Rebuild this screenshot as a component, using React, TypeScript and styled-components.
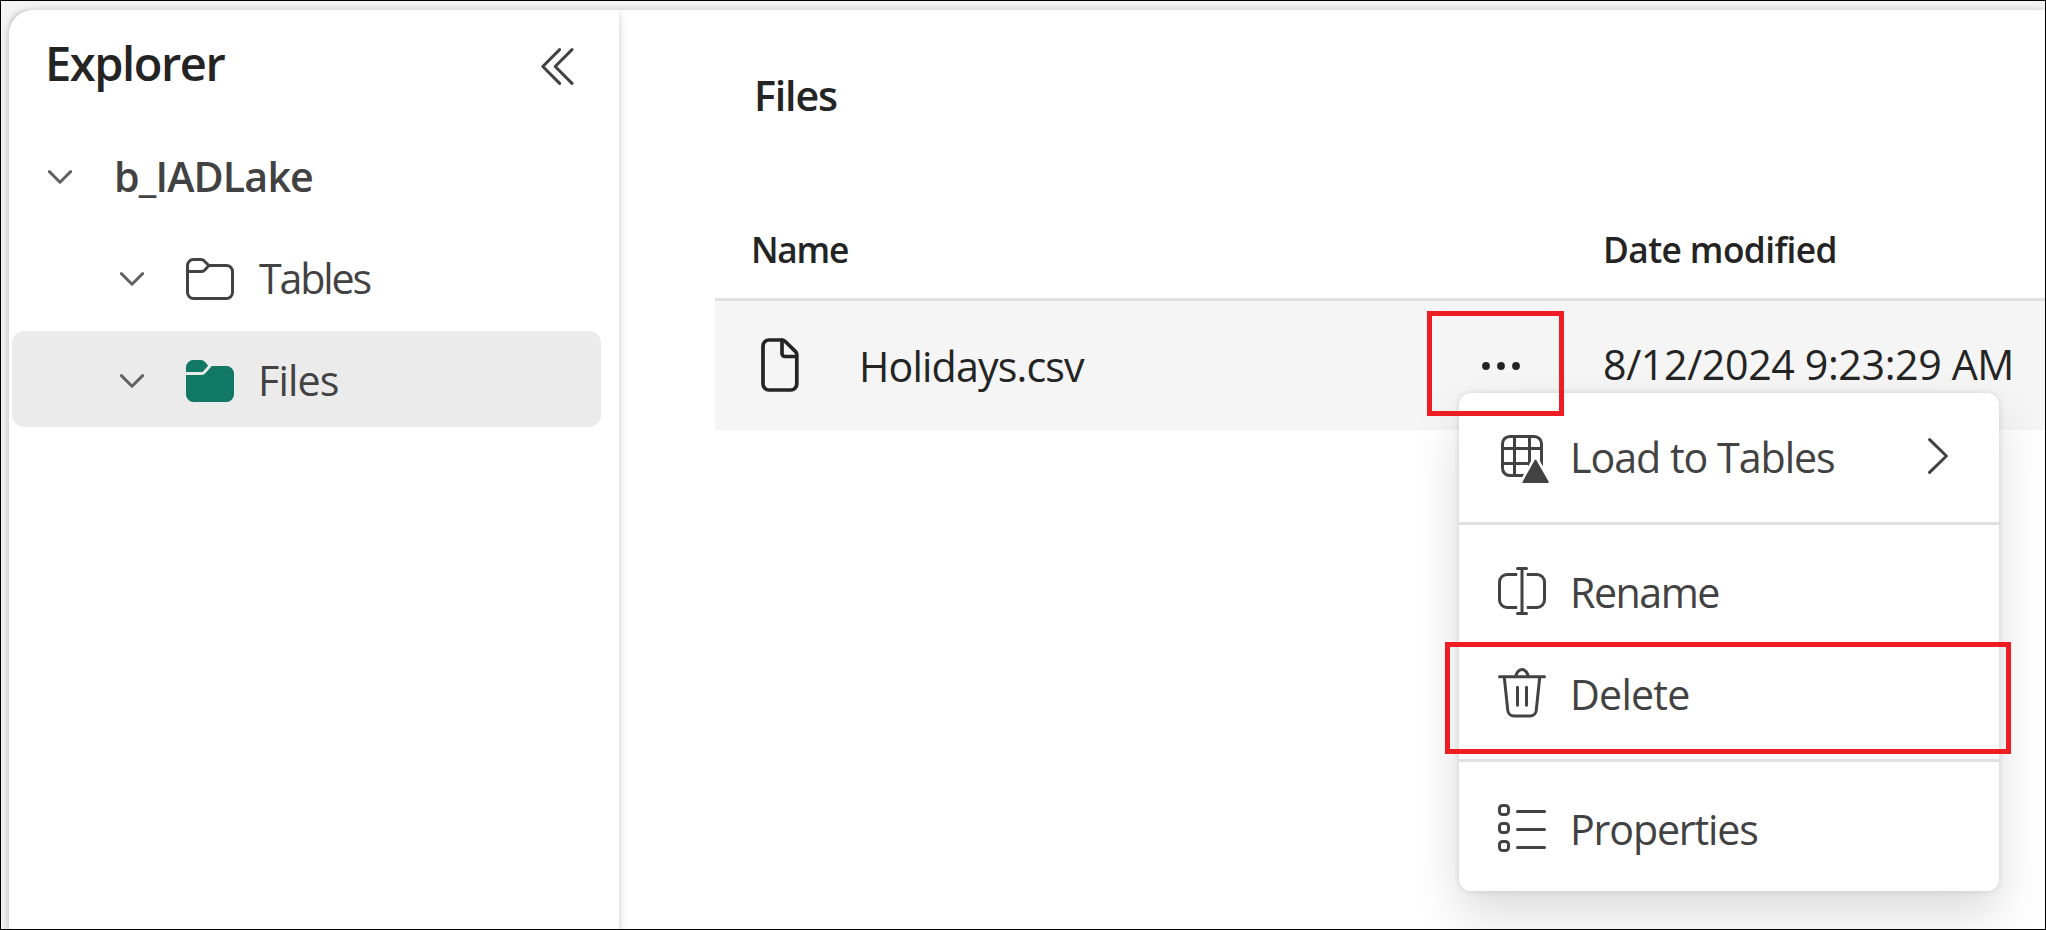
import React from "react";
import styled, { createGlobalStyle } from "styled-components";

const GlobalStyle = createGlobalStyle`
  *, *::before, *::after { box-sizing: border-box; }
  body { margin: 0; font-family: "Open Sans", "Noto Sans", sans-serif; overflow: hidden; }
`;

const Frame = styled.div`
  position: relative;
  width: 2046px;
  height: 930px;
  border: 1px solid #000;
  padding: 9px 0 0 8px;
  background: #f5f4f4;
  overflow: hidden;
`;

const Shell = styled.div`
  display: flex;
  width: 100%;
  height: 920px;
  border-radius: 24px 0 0 0;
  background: #fff;
  box-shadow: 0 0 6px rgba(0, 0, 0, 0.12), 0 3px 12px rgba(0, 0, 0, 0.14);
`;

const Sidebar = styled.aside`
  flex: none;
  width: 610px;
  border-radius: 24px 0 0 0;
  background: #fff;
  box-shadow: 0 0 6px rgba(0, 0, 0, 0.12), 0 6px 12px rgba(0, 0, 0, 0.1);
  clip-path: inset(0 -20px 0 0);
`;

const Label = styled.span<{ $size?: number; $weight?: number; $track?: number; $color?: string; $drop?: number }>`
  display: block;
  font-size: ${(p) => p.$size ?? 41.2}px;
  font-weight: ${(p) => p.$weight ?? 400};
  letter-spacing: ${(p) => p.$track ?? 0}px;
  color: ${(p) => p.$color ?? "#424242"};
  line-height: 60px;
  white-space: nowrap;
  padding-top: ${(p) => Math.max(p.$drop ?? 0, 0)}px;
  padding-bottom: ${(p) => Math.max(-(p.$drop ?? 0), 0)}px;
`;

const SidebarHeader = styled.header`
  display: flex;
  justify-content: space-between;
  align-items: flex-start;
  height: 117px;
  padding: 23px 45px 0 36px;
`;

const CollapseButton = styled.button`
  display: flex;
  margin: 15px 0 0;
  padding: 0;
  border: 0;
  background: none;
`;

const Tree = styled.div`
  display: flex;
  flex-direction: column;
  gap: 6px;
  margin: 0 18px 0 3px;
`;

const TreeRow = styled.div<{ $level: number; $selected?: boolean }>`
  display: flex;
  align-items: center;
  height: 96px;
  padding: 4px 0 0 ${(p) => 36 + p.$level * 72}px;
  border-radius: 12px;
  background: ${(p) => (p.$selected ? "#ebebeb" : "transparent")};
`;

const TreeText = styled.div<{ $gap: number }>`
  margin-left: ${(p) => p.$gap}px;
`;

const FolderSlot = styled.span`
  display: flex;
  margin-left: 36px;
`;

const Main = styled.main`
  flex: 1;
  min-width: 0;
  padding: 55px 0 0 96px;
`;

const Title = styled.h1`
  margin: 0;
  padding-left: 39px;
  height: 135px;
`;

const TableHead = styled.div`
  display: grid;
  grid-template-columns: 852px 1fr;
  align-items: center;
  height: 101px;
  padding: 0 0 1px 36px;
  border-bottom: 3px solid #e0e0e0;
`;

const TableRow = styled.div`
  display: grid;
  grid-template-columns: 99px 622px 122px 1fr;
  align-items: center;
  height: 129px;
  padding-left: 45px;
  background: #f5f5f5;
`;

const DocumentSlot = styled.span`
  display: flex;
  padding-bottom: 2px;
`;

const Menu = styled.div`
  position: absolute;
  left: 1458px;
  top: 392px;
  width: 540px;
  padding: 14px 0 10px;
  border-radius: 12px;
  background: #fff;
  box-shadow: 0 0 6px rgba(0, 0, 0, 0.12), 0 24px 48px rgba(0, 0, 0, 0.14);
`;

const MenuItem = styled.div`
  display: flex;
  align-items: center;
  height: 102px;
  padding: 0 50px 4px 33px;
`;

const MenuText = styled.div`
  flex: 1;
  margin-left: 18px;
`;

const MenuDivider = styled.div`
  height: 3px;
  margin: 13px 0 17px;
  background: #e0e0e0;
`;

const Highlight = styled.div<{ $x: number; $y: number; $w: number; $h: number }>`
  position: absolute;
  left: ${(p) => p.$x}px;
  top: ${(p) => p.$y}px;
  width: ${(p) => p.$w}px;
  height: ${(p) => p.$h}px;
  border: 5px solid #ee1d24;
`;

const Icon = styled.svg<{ $stroke?: string; $fill?: string; $width?: number }>`
  display: block;
  flex: none;
  fill: ${(p) => p.$fill ?? "none"};
  stroke: ${(p) => p.$stroke ?? "#424242"};
  stroke-width: ${(p) => p.$width ?? 1};
  stroke-linecap: round;
  stroke-linejoin: round;
`;

const ChevronDown = () => (
  <Icon width="24" height="14" viewBox="0 0 24 14" $stroke="#616161" $width={2.9}>
    <path d="M1.4 1.6 12 12.2 22.6 1.6" />
  </Icon>
);

const ChevronRight = () => (
  <Icon width="21" height="36" viewBox="0 0 21 36" $width={3}>
    <path d="M1.6 1.6 18.4 18 1.6 34.4" />
  </Icon>
);

const DoubleChevronLeft = () => (
  <Icon width="33" height="37" viewBox="0 0 33 37" $width={3}>
    <path d="M18.6 1.6 1.8 18.5 18.6 35.4M31 1.6 14.2 18.5 31 35.4" />
  </Icon>
);

const FolderOutline = () => (
  <Icon width="60" height="60" viewBox="0 0 20 20">
    <path d="M9.6 5.5h5.9a2 2 0 0 1 2 2v7a2 2 0 0 1-2 2h-11a2 2 0 0 1-2-2v-9a2 2 0 0 1 2-2h2.5c.45 0 .85.2 1.1.5L9.6 5.5 8.2 7.1c-.25.25-.55.4-.9.4H2.6" />
  </Icon>
);

const FolderFilled = () => (
  <Icon width="60" height="60" viewBox="0 0 20 20" $fill="#117865" $stroke="none">
    <path d="M2 7V5.5A2.5 2.5 0 0 1 4.5 3h2.4c.6 0 1.1.25 1.45.65L9.4 4.95 7.7 6.8a.7.7 0 0 1-.5.2Z" />
    <path d="M2 8h5.2c.5 0 .9-.2 1.25-.55L10.6 5h4.9A2.5 2.5 0 0 1 18 7.5v7a2.5 2.5 0 0 1-2.5 2.5h-11A2.5 2.5 0 0 1 2 14.5Z" />
  </Icon>
);

const DocumentIcon = () => (
  <Icon width="40" height="56" viewBox="0 0 40 56" $stroke="#242424" $width={3.7}>
    <path d="M9 3H22c1.2 0 2.2.4 3 1.2l10.6 10.4c.8.8 1.2 1.8 1.2 3V47a6 6 0 0 1-6 6H9a6 6 0 0 1-6-6V9a6 6 0 0 1 6-6Z" />
    <path d="M22 3v13.5a3 3 0 0 0 3 3h11.4" />
  </Icon>
);

const MoreIcon = () => (
  <Icon width="40" height="10" viewBox="0 0 40 10" $fill="#242424" $stroke="none">
    <circle cx="5" cy="5" r="3.9" />
    <circle cx="20" cy="5" r="3.9" />
    <circle cx="35" cy="5" r="3.9" />
  </Icon>
);

const LoadTableIcon = () => (
  <Icon width="60" height="60" viewBox="0 0 20 20">
    <rect x="3.5" y="3.5" width="13" height="13" rx="2.4" />
    <path d="M7.5 3.5v13M12.5 3.5v13M3.5 7.5h13M3.5 12.5h13" />
    <path d="m14.5 11.4-4 7.3h8.1Z" fill="#fff" stroke="#fff" strokeWidth="2.3" />
    <path d="m14.5 11.5-4.05 7.2h8.2Z" fill="#424242" strokeWidth="0.6" />
  </Icon>
);

const RenameIcon = () => (
  <Icon width="60" height="60" viewBox="0 0 20 20">
    <path
      strokeLinecap="butt"
      d="M8.4 4.5H5A2.5 2.5 0 0 0 2.5 7v6A2.5 2.5 0 0 0 5 15.5h3.4M11.6 4.5H15A2.5 2.5 0 0 1 17.5 7v6a2.5 2.5 0 0 1-2.5 2.5h-3.4"
    />
    <path d="M8.5 2.5h3M8.5 17.5h3M10 2.5v15" />
  </Icon>
);

const DeleteIcon = () => (
  <Icon width="60" height="60" viewBox="0 0 20 20">
    <path d="M2.5 4.6h15M8 4.6a2 2.4 0 0 1 4 0M4.1 4.8l1.15 11a2.1 2.1 0 0 0 2.1 1.9h5.3a2.1 2.1 0 0 0 2.1-1.9l1.15-11M8.5 8.1v6M11.5 8.1v6" />
  </Icon>
);

const PropertiesIcon = () => (
  <Icon width="60" height="60" viewBox="0 0 20 20">
    {[2.5, 8.5, 14.5].map((y) => (
      <React.Fragment key={y}>
        <rect x="2.5" y={y} width="3" height="3" rx="1" />
        <path d={`M8.5 ${y + 2}h9`} />
      </React.Fragment>
    ))}
  </Icon>
);

export default function App() {
  return (
    <>
      <GlobalStyle />
      <Frame>
        <Shell>
          <Sidebar>
            <SidebarHeader>
              <Label $size={47} $weight={600} $track={-1.45} $color="#242424">Explorer</Label>
              <CollapseButton aria-label="Collapse explorer"><DoubleChevronLeft /></CollapseButton>
            </SidebarHeader>
            <Tree>
              <TreeRow $level={0}>
                <ChevronDown />
                <TreeText $gap={42}><Label $weight={600} $track={-0.86} $drop={-2}>b_IADLake</Label></TreeText>
              </TreeRow>
              <TreeRow $level={1}>
                <ChevronDown />
                <FolderSlot><FolderOutline /></FolderSlot>
                <TreeText $gap={19}><Label $track={-2.15} $drop={-2}>Tables</Label></TreeText>
              </TreeRow>
              <TreeRow $level={1} $selected>
                <ChevronDown />
                <FolderSlot><FolderFilled /></FolderSlot>
                <TreeText $gap={18}><Label $track={-0.85} $drop={-2}>Files</Label></TreeText>
              </TreeRow>
            </Tree>
          </Sidebar>
          <Main>
            <Title><Label $weight={600} $track={-1.15} $color="#242424">Files</Label></Title>
            <TableHead>
              <Label $size={35.3} $weight={600} $track={-1.3} $color="#242424">Name</Label>
              <Label $size={35.3} $weight={600} $track={-0.6} $color="#242424">Date modified</Label>
            </TableHead>
            <TableRow>
              <DocumentSlot><DocumentIcon /></DocumentSlot>
              <Label $track={-0.85} $color="#242424">Holidays.csv</Label>
              <MoreIcon />
              <Label $track={-0.4} $color="#242424" $drop={-4}>8/12/2024 9:23:29 AM</Label>
            </TableRow>
          </Main>
        </Shell>
        <Menu>
          <MenuItem>
            <LoadTableIcon />
            <MenuText><Label $track={-1.03} $drop={2}>Load to Tables</Label></MenuText>
            <ChevronRight />
          </MenuItem>
          <MenuDivider />
          <MenuItem>
            <RenameIcon />
            <MenuText><Label $track={-1.5} $drop={2}>Rename</Label></MenuText>
          </MenuItem>
          <MenuItem>
            <DeleteIcon />
            <MenuText><Label $track={-0.8} $drop={2}>Delete</Label></MenuText>
          </MenuItem>
          <MenuDivider />
          <MenuItem>
            <PropertiesIcon />
            <MenuText><Label $track={-1.17} $drop={2}>Properties</Label></MenuText>
          </MenuItem>
        </Menu>
        <Highlight $x={1426} $y={310} $w={137} $h={105} />
        <Highlight $x={1444} $y={641} $w={566} $h={112} />
      </Frame>
    </>
  );
}
